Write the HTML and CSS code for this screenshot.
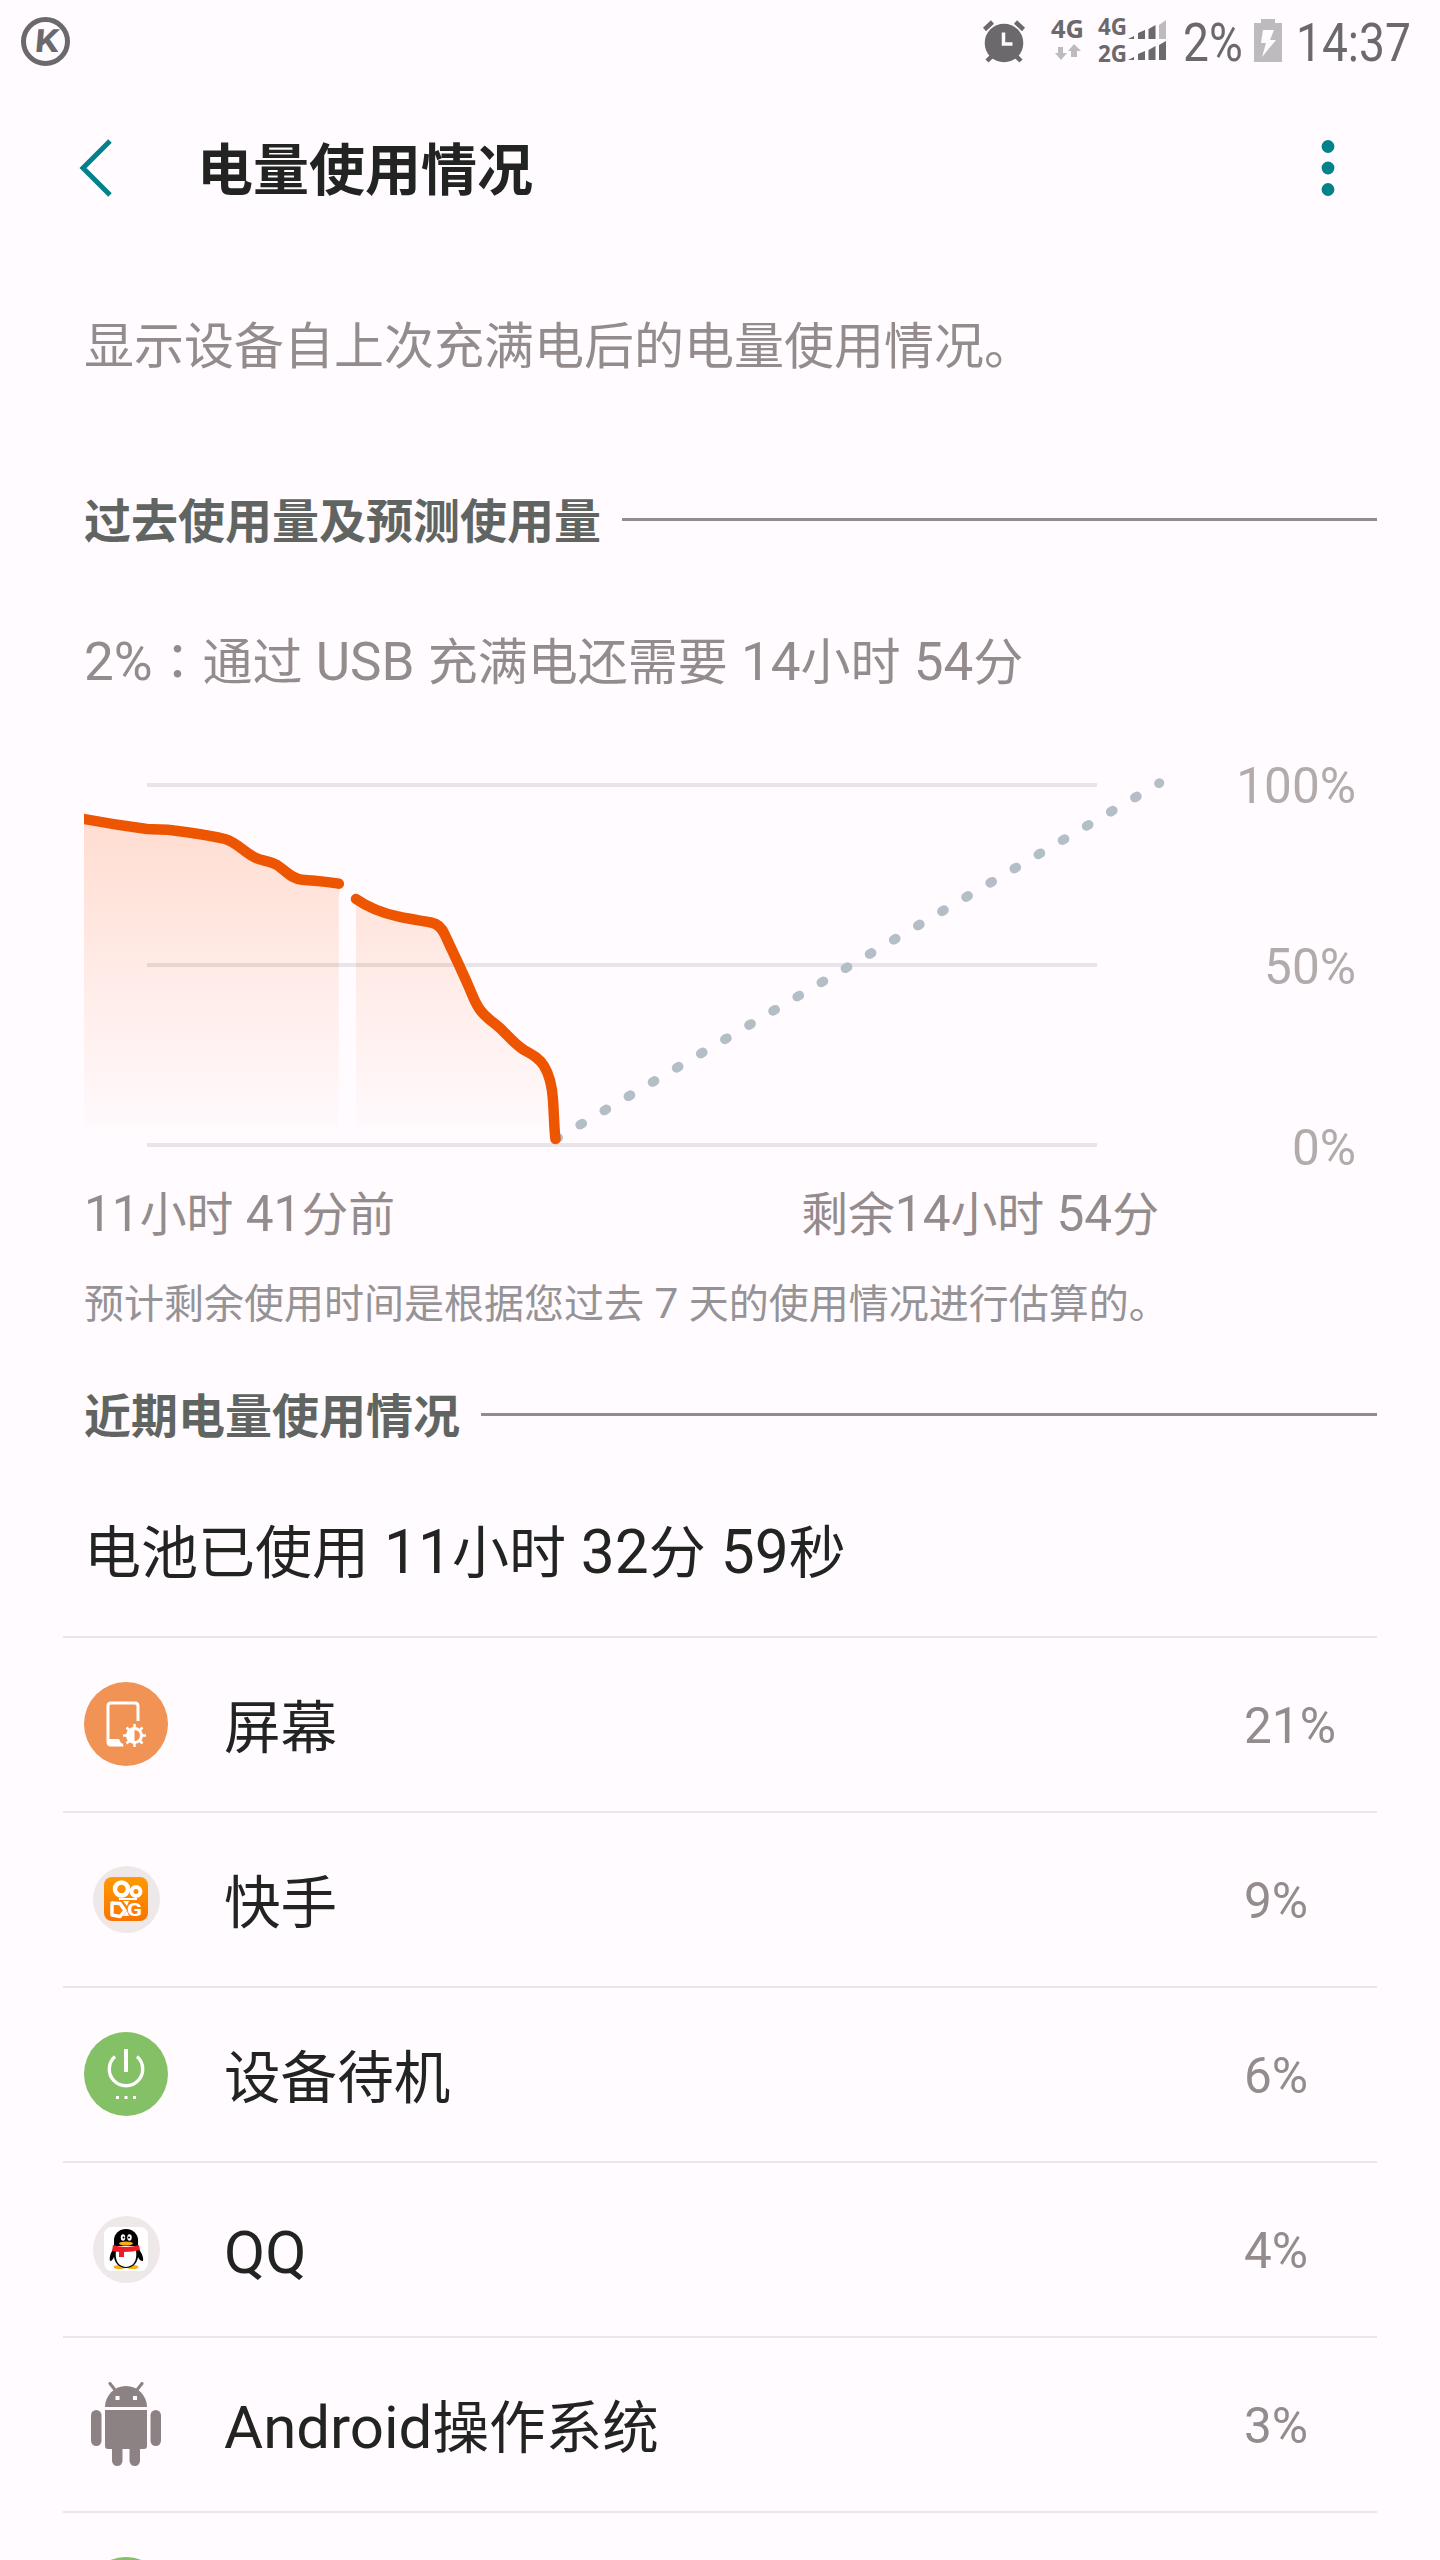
FILE: index.html
```html
<!DOCTYPE html>
<html lang="zh-CN">
<head>
    <meta charset="UTF-8">
    <meta name="viewport" content="width=device-width, initial-scale=1.0">
    <title>电量使用情况</title>
    <link rel="stylesheet" href="styles.css">
</head>
<body>

<div class="status-bar">
    <svg class="app-badge" width="50" height="50" viewBox="0 0 50 50">
        <circle cx="24.500" cy="24.500" r="22" fill="none" stroke="#6b696c" stroke-width="5"/>
        <text x="13" y="35.500" class="badge-letter" textLength="24" lengthAdjust="spacingAndGlyphs" transform="translate(3) skewX(-5)">K</text>
    </svg>
    <div class="status-icons">
        <svg class="alarm" width="42" height="43" viewBox="0 0 42 43">
            <circle cx="21" cy="23" r="19.3"/>
            <path d="M1.5 9.5 9.5 2M32.500 2l8 7.500M4 41l6-6M32 35l6 6" fill="none" stroke="#6b696c" stroke-width="4.500"/>
            <path d="M20.500 12.500v11.500h9" fill="none" stroke="#fffbff" stroke-width="3.500"/>
        </svg>
        <svg class="data" width="34" height="44" viewBox="0 0 34 44">
            <text x="0" y="20" class="net" font-size="25" textLength="33" lengthAdjust="spacingAndGlyphs">4G</text>
            <path class="light" d="M7 29h5v6h4l-6 7-6-7h3zM20 39h6v-6h4l-7-7-6 7h3z"/>
        </svg>
        <svg class="signal" width="70" height="46" viewBox="0 0 70 46">
            <text x="0" y="18" class="net" font-size="24" textLength="29" lengthAdjust="spacingAndGlyphs">4G</text>
            <text x="0" y="45" class="net" font-size="24" textLength="29" lengthAdjust="spacingAndGlyphs">2G</text>
            <path d="M30 22l6-3v3zM40 22v-6l7-3v9zM50.500 22v-10l7-4v14z"/>
            <path class="light" d="M61 22v-14l7-5v19z"/>
            <path d="M30 43l6-3v3zM40 43v-6l7-3v9zM50.500 43v-10l7-4v14zM61 43v-15l7-4v19z"/>
        </svg>
        <span class="level"><span class="condensed">2%</span></span>
        <svg class="battery" width="28" height="43" viewBox="0 0 28 43">
            <path class="light" d="M7 0h14v4h7v39h-28v-39h7z"/>
            <path d="M9 11h11l-4 10h6l-14 17 4-14h-5z" fill="#fffbff"/>
        </svg>
        <span class="clock"><span class="condensed">14:37</span></span>
    </div>
</div>

<div class="app-bar">
    <svg class="back" width="36" height="58" viewBox="0 0 36 58">
        <path d="M33 2 6 29l27 27" fill="none" stroke="#01828b" stroke-width="5"/>
    </svg>
    <h1>电量使用情况</h1>
    <svg class="more" width="14" height="58" viewBox="0 0 14 58">
        <circle cx="7" cy="7.500" r="6.400"/>
        <circle cx="7" cy="29" r="6.400"/>
        <circle cx="7" cy="50.500" r="6.400"/>
    </svg>
</div>

<div class="content">
    <p class="description">显示设备自上次充满电后的电量使用情况。</p>

    <h2 class="section past">过去使用量及预测使用量</h2>
    <p class="charge"><span class="latin">2%</span><span class="colon" lang="zh-TW">：</span>通过<span class="latin"> USB </span>充满电还需要<span class="latin"> 14</span>小时<span class="latin"> 54</span>分</p>

    <div class="chart">
        <svg width="1090" height="390" viewBox="0 0 1090 390">
            <defs>
                <linearGradient id="fade" gradientUnits="userSpaceOnUse" x1="0" y1="50" x2="0" y2="375">
                    <stop offset="0" stop-color="#ffddd1"/>
                    <stop offset="1" stop-color="#ffddd1" stop-opacity="0"/>
                </linearGradient>
            </defs>
            <path d="M0 49C10 51 40 56 63 59C75 60 80 59 90 60.500C110 63 128 66 141 69C155 73 163 86 176 89.500C182 91 188 92 193 95C202 101 208 109 218 109.700C230 110.500 240 111 254.800 113.700V357H0Z" fill="url(#fade)"/>
            <path d="M272 129C285 138 300 143.500 314.800 146.700C328 149.500 336 150.500 347 152.500C353 153.500 356 158 359 165L384 215C389 226 391 234 397 241C403 249 411 253 419 261C425 267 432 275 440 280C450 285.500 456 289 460 296C465 304 468 315 469 330L470 357H272Z" fill="url(#fade)"/>
            <path d="M63 15h950M63 195h950M63 375h950" stroke="#000" stroke-opacity="0.090" stroke-width="4"/>
            <path d="M472 369 1075.500 13" stroke="#b3bec7" stroke-width="9.500" stroke-linecap="round" stroke-dasharray="2.500 25.500" fill="none"/>
            <g fill="none" stroke="#ee5500" stroke-width="10.500" stroke-linecap="round" stroke-linejoin="round">
                <path d="M-8 47.500C10 51 40 56 63 59C75 60 80 59 90 60.500C110 63 128 66 141 69C155 73 163 86 176 89.500C182 91 188 92 193 95C202 101 208 109 218 109.700C230 110.500 240 111 254.800 113.700"/>
                <path d="M272 129C285 138 300 143.500 314.800 146.700C328 149.500 336 150.500 347 152.500C353 153.500 358 158 361 165C366 176 378 201 384 215C389 226 391 234 397 241C403 249 411 253 419 261C425 267 432 275 440 280C450 285.500 456 289 460 296C465 304 468 315 469 330C470 343 470 358 471.500 369"/>
            </g>
        </svg>
        <div class="y-labels">
            <span>100%</span>
            <span>50%</span>
            <span>0%</span>
        </div>
    </div>
    <div class="x-labels">
        <span><span class="latin">11</span>小时<span class="latin"> 41</span>分前</span>
        <span>剩余<span class="latin">14</span>小时<span class="latin"> 54</span>分</span>
    </div>
    <p class="footnote">预计剩余使用时间是根据您过去<span class="latin"> 7 </span>天的使用情况进行估算的。</p>

    <h2 class="section recent">近期电量使用情况</h2>
    <p class="used">电池已使用<span class="latin"> 11</span>小时<span class="latin"> 32</span>分<span class="latin"> 59</span>秒</p>
</div>

<ul class="usage-list">
    <li>
        <svg class="icon" viewBox="0 0 84 84">
            <circle cx="42" cy="42" r="42" fill="#f09355"/>
            <path d="M54 39V24q0-3-3-3H27q-3 0-3 3v36q0 3 3 3h12" fill="none" stroke="#fff" stroke-width="3"/>
            <path d="M24 57h11q2 5 5 7h-13q-3 0-3-3z" fill="#fff"/>
            <circle cx="50.500" cy="53.500" r="7" fill="none" stroke="#fff" stroke-width="3"/>
            <path d="M50.500 46a7.500 7.500 0 0 0 0 15z" fill="#fff"/>
            <path d="M50.500 42v4M50.500 61v4M39 53.500h4M58 53.500h4M42.500 45.500l3 3M55.500 58.500l3 3M42.500 61.500l3-3M55.500 48.500l3-3" stroke="#fff" stroke-width="2.500"/>
        </svg>
        <span class="name">屏幕</span>
        <span class="percent">21%</span>
    </li>
    <li>
        <svg class="icon" viewBox="0 0 84 84">
            <circle cx="42.500" cy="42.500" r="33.500" fill="#eee8e9"/>
            <linearGradient id="kwai" x1="0" y1="0" x2="0" y2="1">
                <stop offset="0" stop-color="#ff9a00"/>
                <stop offset="1" stop-color="#f97400"/>
            </linearGradient>
            <rect x="20" y="20" width="44" height="44" rx="8" fill="url(#kwai)"/>
            <g fill="none" stroke="#fff">
                <circle cx="37.500" cy="32" r="6.500" stroke-width="4.500"/>
                <circle cx="52" cy="34.500" r="4.500" stroke-width="4"/>
                <path d="M35 42h18" stroke-width="2"/>
                <path d="M28 46l8 0.500 5 7-5 6-8-1.500z" stroke-width="3.500" stroke-linejoin="round"/>
            </g>
            <path d="M39 44h6l-2 5zM43 54l2 5h-6z" fill="#fff"/>
            <text x="43" y="59" class="kwai-letter" textLength="15" lengthAdjust="spacingAndGlyphs">G</text>
        </svg>
        <span class="name">快手</span>
        <span class="percent">9%</span>
    </li>
    <li>
        <svg class="icon" viewBox="0 0 84 84">
            <circle cx="42" cy="42" r="42" fill="#84c065"/>
            <path d="M42 17v23" stroke="#fff" stroke-width="4"/>
            <path d="M31 24.500a16.700 16.700 0 1 0 22 0" fill="none" stroke="#fff" stroke-width="3.400"/>
            <path d="M32 65.500h3M40.500 65.500h3M49 65.500h3" stroke="#fff" stroke-width="3"/>
        </svg>
        <span class="name">设备待机</span>
        <span class="percent">6%</span>
    </li>
    <li>
        <svg class="icon" viewBox="0 0 84 84">
            <circle cx="42.500" cy="42.500" r="33.500" fill="#eee8e9"/>
            <rect x="20" y="20" width="44" height="44" rx="8" fill="#fff"/>
            <ellipse cx="35.500" cy="60" rx="6" ry="2" fill="#fbac13"/>
            <ellipse cx="48.500" cy="60" rx="6" ry="2" fill="#fbac13"/>
            <path d="M30 41c-3 4-5 9-4 13 2 0 3-2 4-4 1 7 6 11 12 11s11-4 12-11c1 2 2 4 5 4 1-4-2-9-5-13z" fill="#000"/>
            <path d="M30 39V33a12 11 0 0 1 24 0v6z" fill="#000"/>
            <path d="M32 43h20q2 16-10 17q-12-1-10-17" fill="#fff"/>
            <path d="M29 38q13 4 26 0l1 5q-7 2-16 2v5h-5v-5l-7-1z" fill="#ec1c24"/>
            <ellipse cx="39" cy="30.500" rx="2.200" ry="3.300" fill="#fff"/>
            <ellipse cx="45.500" cy="30.500" rx="2.200" ry="3.300" fill="#fff"/>
            <circle cx="39.500" cy="30.500" r="1" fill="#000"/>
            <circle cx="45" cy="30.500" r="1" fill="#000"/>
            <ellipse cx="42" cy="36.500" rx="7" ry="2" fill="#fbac13"/>
        </svg>
        <span class="name"><span class="latin">QQ</span></span>
        <span class="percent">4%</span>
    </li>
    <li>
        <svg class="icon" viewBox="0 0 84 84" fill="#8d8283">
            <path d="M21 25a21 21 0 0 1 42 0z"/>
            <path d="M26 1.500l5.500 7M58 1.500l-5.500 7" stroke="#8d8283" stroke-width="3" stroke-linecap="round"/>
            <path d="M21 28h42v36q0 3-3 3H24q-3 0-3-3z"/>
            <rect x="7" y="28" width="10.500" height="36" rx="5.200"/>
            <rect x="66.500" y="28" width="10.500" height="36" rx="5.200"/>
            <rect x="28" y="60" width="10.500" height="24" rx="5.200"/>
            <rect x="45.500" y="60" width="10.500" height="24" rx="5.200"/>
            <path d="M31.500 14h4v4h-4zM49 14h4v4h-4z" fill="#fff"/>
        </svg>
        <span class="name"><span class="latin">Android</span>操作系统</span>
        <span class="percent">3%</span>
    </li>
    <li>
        <svg class="icon" viewBox="0 0 84 84">
            <circle cx="42" cy="42" r="42" fill="#84c065"/>
        </svg>
    </li>
</ul>

</body>
</html>
```

FILE: styles.css
```css
* {
    box-sizing: border-box;
}
html, body {
    height: 2560px;
    overflow: hidden;
}
body {
    margin: 0;
    width: 1440px;
    background-color: #fffbff;
    color: #222422;
    font-family: Roboto, "Noto Sans CJK SC", sans-serif;
}
h1, h2, p, ul {
    margin: 0;
    padding: 0;
}
svg {
    display: block;
    flex: none;
}
/* digits and latin letters run slightly larger than the hanzi */
.latin {
    font-size: 1.06em;
    line-height: 0;
    white-space: pre-wrap;
}
.colon {
    font-family: "Noto Sans CJK TC", sans-serif;
    line-height: 0;
}

/* status bar */
.status-bar {
    display: flex;
    justify-content: space-between;
    height: 90px;
    padding: 17px 27px 0 21px;
    fill: #6b696c;
    color: #6b696c;
}
.status-bar svg {
    overflow: visible;
}
.badge-letter {
    font: bold 32px Roboto, sans-serif;
}
.status-icons {
    display: flex;
    align-items: flex-start;
}
.net {
    font-family: "Noto Sans", sans-serif;
    font-weight: bold;
}
.light {
    fill: #bdbbbe;
}
.alarm {
    margin: 3px 26px 0 0;
}
.data {
    margin: 1px 13px 0 0;
}
.level, .clock {
    font-size: 53px;
    line-height: 52px;
    white-space: nowrap;
}
.level {
    width: 60px;
    margin-left: 15px;
}
.clock {
    width: 117px;
    margin-left: 14px;
}
.condensed {
    display: inline-block;
    transform: scaleX(0.87);
    transform-origin: left;
}
.battery {
    margin: 2px 0 0 11px;
}

/* title */
.app-bar {
    display: flex;
    align-items: center;
    height: 156px;
    padding: 0 105px 0 77px;
}
h1 {
    flex: 1;
    margin-left: 84px;
    padding-top: 6px;
    font-size: 56px;
    line-height: 70px;
    font-weight: bold;
}
.more {
    fill: #01828b;
}

.content {
    padding: 66px 63px 0 84px;
}
.description {
    font-size: 50px;
    line-height: 70px;
    color: #948b8c;
}
.section {
    display: flex;
    align-items: center;
    font-size: 47px;
    line-height: 60px;
    font-weight: bold;
    color: #616562;
}
.section::after {
    content: "";
    flex: 1;
    height: 3px;
    margin: 0 0 5px 21px;
    background-color: #918d8f;
}
.past {
    margin-top: 110px;
}
.charge {
    margin-top: 76px;
    font-size: 50px;
    line-height: 70px;
    color: #948b8c;
}

/* chart */
.chart {
    display: flex;
    justify-content: space-between;
    height: 402px;
    margin-top: 68px;
    padding-right: 21px;
}
.chart svg {
    margin-top: 4px;
}
.y-labels {
    display: flex;
    flex-direction: column;
    justify-content: space-between;
    text-align: right;
    font-size: 49.5px;
    line-height: 40px;
    color: #b3abab;
}
.x-labels {
    display: flex;
    justify-content: space-between;
    width: 1075px;
    margin-top: 17px;
    font-size: 46.8px;
    line-height: 60px;
    color: #948b8c;
}
.footnote {
    margin-top: 35px;
    font-size: 40px;
    line-height: 50px;
    color: #959395;
}
.recent {
    margin-top: 57px;
}
.used {
    margin-top: 67px;
    font-size: 57px;
    line-height: 80px;
}

/* app list */
.usage-list {
    margin: 42px 63px 0;
    list-style: none;
}
.usage-list li {
    display: flex;
    align-items: center;
    height: 175px;
    padding-left: 21px;
    border-top: 2px solid #e9e5e8;
}
.icon {
    width: 84px;
    height: 84px;
    margin-bottom: 2px;
}
.kwai-letter {
    font: bold 18px Roboto, sans-serif;
    fill: #fff;
}
.name {
    flex: 1;
    margin-left: 56px;
    padding-top: 9px;
    font-size: 56.6px;
    line-height: 80px;
}
.percent {
    width: 133px;
    padding-top: 3px;
    font-size: 49.5px;
    line-height: 70px;
    color: #948b8c;
}
```
